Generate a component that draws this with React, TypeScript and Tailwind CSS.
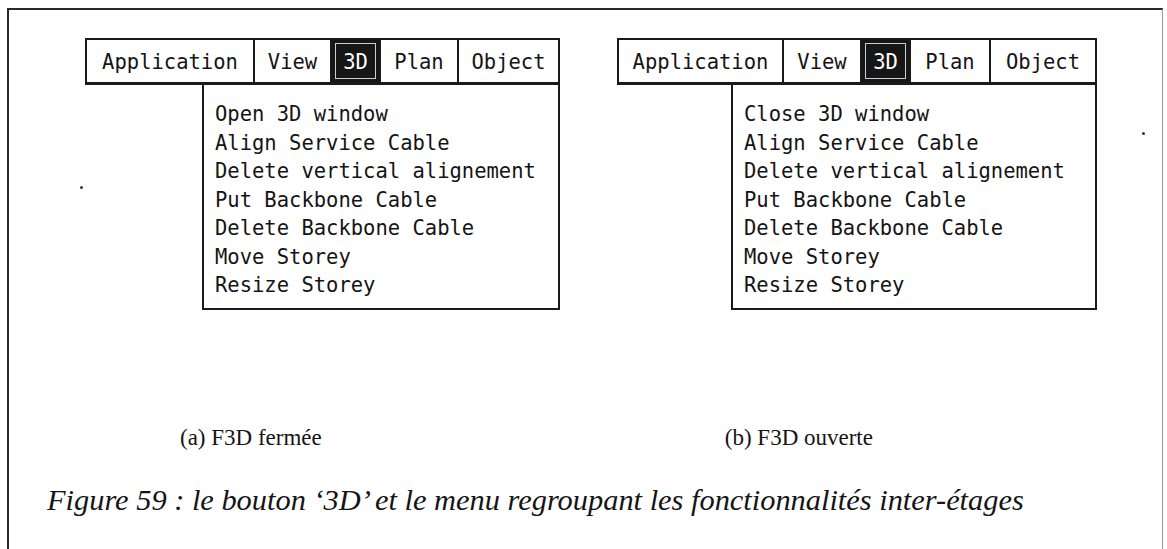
const menus = ["Application", "View", "3D", "Plan", "Object"];

const itemsA = [
  "Open 3D window",
  "Align Service Cable",
  "Delete vertical alignement",
  "Put Backbone Cable",
  "Delete Backbone Cable",
  "Move Storey",
  "Resize Storey",
];

const itemsB = ["Close 3D window", ...itemsA.slice(1)];

function MenuPanel({
  widths,
  dropWidth,
  items,
}: {
  widths: number[];
  dropWidth: string;
  items: string[];
}) {
  return (
    <div className="flex flex-col items-end font-['DejaVu_Sans_Mono',monospace] text-[20.5px] text-[#141414]">
      <div className="flex h-[47px] border-2 border-b-[3px] border-[#1a1a1a] bg-white">
        {menus.map((m, i) => (
          <div
            key={m}
            style={{ width: widths[i] }}
            className={
              i === 0
                ? "flex items-center justify-center pt-[3px]"
                : "flex items-center justify-center border-l-2 border-[#1a1a1a] pt-[3px]"
            }
          >
            {m === "3D" ? (
              <span className="-mt-[3px] flex h-[calc(100%+3px)] w-full items-center justify-center bg-[#161616] p-[3px]">
                <span className="flex h-full w-full items-center justify-center border border-[#cfcfcf] pt-[3px] text-white">
                  3D
                </span>
              </span>
            ) : (
              m
            )}
          </div>
        ))}
      </div>
      <div
        className={`${dropWidth} border-2 border-t-0 border-[#1a1a1a] pl-[11px] pt-[15px] pb-[8px] leading-[28.5px]`}
      >
        {items.map((t) => (
          <div key={t} className="whitespace-pre">
            {t}
          </div>
        ))}
      </div>
    </div>
  );
}

export default function App() {
  return (
    <div className="h-[549px] w-[1167px] overflow-hidden bg-white">
      <div className="relative ml-[7px] mt-[8px] h-[560px] w-[1156px] border-l-2 border-t-2 border-r border-[#2a2a2a] border-r-[#9a9a9a]">
        {/* scan specks */}
        <span className="absolute left-[71px] top-[176px] h-[3px] w-[3px] rounded-full bg-[#333]" />
        <span className="absolute left-[1133px] top-[122px] h-[3px] w-[3px] rounded-full bg-[#333]" />

        <div className="flex pt-[28px]">
          <div className="ml-[76px]">
            <MenuPanel
              widths={[166, 77, 49, 78, 101]}
              dropWidth="w-[358px]"
              items={itemsA}
            />
          </div>
          <div className="ml-[57px]">
            <MenuPanel
              widths={[163, 78, 49, 80, 106]}
              dropWidth="w-[366px]"
              items={itemsB}
            />
          </div>
        </div>

        <div className="mt-[115px] flex font-['Liberation_Serif',serif] text-[23px] leading-[26px] text-[#151515]">
          <span className="ml-[171px]">(a) F3D fermée</span>
          <span className="ml-[403px]">(b) F3D ouverte</span>
        </div>

        <p className="ml-[38px] mt-[32px] font-['Liberation_Serif',serif] text-[30.4px] italic leading-[34px] text-[#151515]">
          Figure 59 : le bouton ‘3D’ et le menu regroupant les fonctionnalités inter-étages
        </p>
      </div>
    </div>
  );
}
